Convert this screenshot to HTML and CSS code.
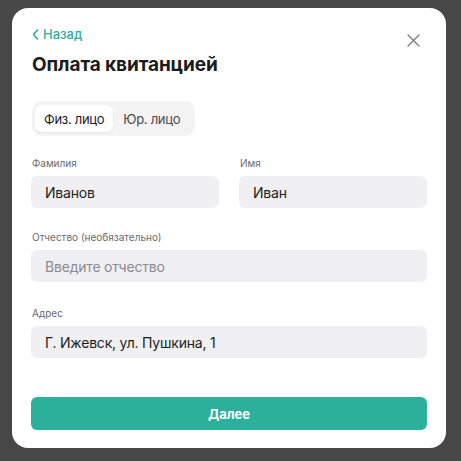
FILE: index.html
```html
<!DOCTYPE html>
<html lang="ru">
<head>
<meta charset="utf-8">
<link rel="stylesheet" href="styles.css">
</head>
<body>
<div class="overlay">
  <div class="modal">
    <div class="top">
      <a class="back" href="#"><svg width="7" height="11" viewBox="0 0 7 11"><path d="M5.5 1 L1.5 5.5 L5.5 10" fill="none" stroke="#2bb09a" stroke-width="1.6" stroke-linecap="round" stroke-linejoin="round"/></svg>Назад</a>
      <button class="close" aria-label="Закрыть"><svg width="13" height="13" viewBox="0 0 13 13"><path d="M1 1 L12 12 M12 1 L1 12" stroke="#7a7a7a" stroke-width="1.3" stroke-linecap="round"/></svg></button>
    </div>
    <h1 class="title">Оплата квитанцией</h1>
    <div class="toggle">
      <span class="opt active">Физ. лицо</span>
      <span class="opt">Юр. лицо</span>
    </div>
    <div class="row two">
      <div class="field">
        <label class="label">Фамилия</label>
        <div class="input">Иванов</div>
      </div>
      <div class="field">
        <label class="label">Имя</label>
        <div class="input">Иван</div>
      </div>
    </div>
    <div class="field">
      <label class="label">Отчество (необязательно)</label>
      <div class="input placeholder">Введите отчество</div>
    </div>
    <div class="field address">
      <label class="label">Адрес</label>
      <div class="input">Г. Ижевск, ул. Пушкина, 1</div>
    </div>
    <button class="submit">Далее</button>
  </div>
</div>
</body>
</html>
```

FILE: styles.css
```css
* { box-sizing: border-box; }
html, body { margin: 0; padding: 0; }
body {
  width: 461px;
  height: 461px;
  background: #474747;
  font-family: Inter, "Noto Sans", sans-serif;
  overflow: hidden;
}
.overlay {
  padding: 8px 15px 13px 12px;
  height: 461px;
}
.modal {
  width: 434px;
  height: 440px;
  background: #ffffff;
  border-radius: 16px;
  padding: 19px 19px 18px 19px;
  display: flex;
  flex-direction: column;
}
.top {
  display: flex;
  justify-content: space-between;
  align-items: center;
  height: 14px;
}
.back {
  display: flex;
  align-items: center;
  gap: 4px;
  color: #2bb09a;
  font-size: 13px;
  font-weight: 500;
  text-decoration: none;
  padding-left: 1px;
}
.close {
  border: 0;
  background: none;
  padding: 0;
  margin-right: 7px;
  margin-top: 12px;
  display: flex;
}
.title {
  margin: 12px 0 0 1px;
  font-size: 19px;
  font-weight: 700;
  color: #1c1c1e;
  line-height: 24px;
  letter-spacing: -0.1px;
}
.toggle {
  margin-top: 24px;
  align-self: flex-start;
  display: flex;
  gap: 1px;
  background: #f3f3f4;
  border-radius: 10px;
  padding: 4px 6px 4px 3px;
  height: 35px;
  margin-left: 1px;
}
.opt {
  display: flex;
  align-items: center;
  padding: 0 9px;
  font-size: 13px;
  letter-spacing: -0.3px;
  white-space: nowrap;
  color: #4a4a4e;
  border-radius: 7px;
}
.opt.active {
  background: #ffffff;
  color: #1c1c1e;
  box-shadow: 0 1px 2px rgba(0,0,0,0.06);
}
.row.two {
  display: grid;
  grid-template-columns: 1fr 1fr;
  column-gap: 20px;
  margin-top: 20px;
}
.field {
  display: flex;
  flex-direction: column;
  margin-top: 22px;
}
.field.address { margin-top: 24px; }
.row.two .field { margin-top: 0; }
.label {
  font-size: 10px;
  color: #6b6b70;
  line-height: 14px;
  padding-left: 1px;
  margin-bottom: 6px;
}
.input {
  height: 32px;
  background: #f0f0f2;
  border-radius: 6px;
  display: flex;
  align-items: center;
  padding-left: 14px;
  font-size: 14px;
  letter-spacing: -0.2px;
  color: #1c1c1e;
}
.input.placeholder { color: #8a8a90; }
.submit {
  margin-top: auto;
  height: 33px;
  border: 0;
  border-radius: 6px;
  background: #2bb19b;
  color: #ffffff;
  font-family: Inter, "Noto Sans", sans-serif;
  font-size: 13px;
  font-weight: 700;
}
```
